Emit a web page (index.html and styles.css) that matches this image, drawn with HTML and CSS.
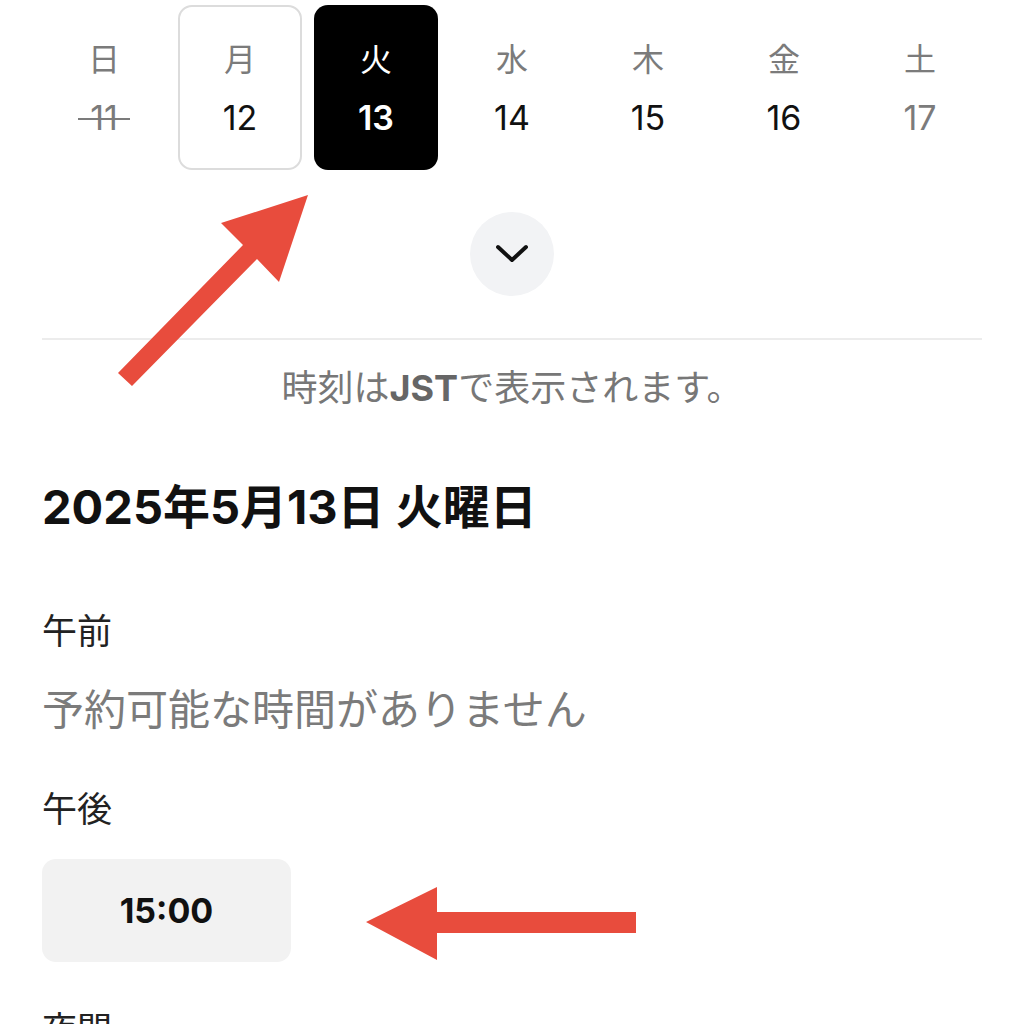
FILE: index.html
```html
<!DOCTYPE html>
<html lang="ja">
<head>
    <meta charset="UTF-8">
    <meta name="viewport" content="width=device-width, initial-scale=1.0">
    <title>予約</title>
    <link rel="stylesheet" href="styles.css">
</head>
<body>

<div class="page">
    <div class="week">
        <div class="day past"><span class="dow">日</span><span class="num">11</span></div>
        <div class="day outlined"><span class="dow">月</span><span class="num">12</span></div>
        <div class="day selected"><span class="dow">火</span><span class="num">13</span></div>
        <div class="day"><span class="dow">水</span><span class="num">14</span></div>
        <div class="day"><span class="dow">木</span><span class="num">15</span></div>
        <div class="day"><span class="dow">金</span><span class="num">16</span></div>
        <div class="day muted"><span class="dow">土</span><span class="num">17</span></div>
    </div>

    <div class="expand-row">
        <button class="expand-btn" type="button">
            <svg width="34" height="20" viewBox="0 0 34 20"><path d="M3 3 L17 16 L31 3" fill="none" stroke="#111" stroke-width="4" stroke-linecap="round" stroke-linejoin="round"/></svg>
        </button>
    </div>

    <hr class="divider">

    <p class="tz-note">時刻は<b>JST</b>で表示されます。</p>

    <h1 class="date-title">2025年5月13日 火曜日</h1>

    <h3 class="period">午前</h3>
    <p class="empty">予約可能な時間がありません</p>

    <h3 class="period">午後</h3>
    <div class="slots">
        <button class="slot" type="button">15:00</button>
    </div>

    <h3 class="period">夜間</h3>

    <!-- annotation arrows -->
    <svg class="arrow" width="1024" height="1024" viewBox="0 0 1024 1024">
        <polygon points="308,195 279,282 257,259 132,386 118,373 243,245 221,223" fill="#e84c3d"/>
    </svg>
    <svg class="arrow" width="1024" height="1024" viewBox="0 0 1024 1024">
        <polygon points="366,922 437,887 437,912 636,912 636,933 437,933 437,960" fill="#e84c3d"/>
    </svg>
</div>

</body>
</html>
```

FILE: styles.css
```css
body {
    margin: 0;
    background-color: #fff;
    font-family: Inter, "Noto Sans CJK JP", sans-serif;
    color: #111;
}
.page {
    position: relative;
    height: 1024px;
    overflow: hidden;
    padding: 5px 42px 0;
}
.week {
    display: grid;
    grid-template-columns: repeat(7, 1fr);
    gap: 12px;
}
.day {
    height: 165px;
    box-sizing: border-box;
    border: 2px solid transparent;
    border-radius: 14px;
    display: flex;
    flex-direction: column;
    align-items: center;
    padding-top: 33px;
}
.dow {
    font-size: 32px;
    line-height: 40px;
    color: #7b7b7b;
}
.num {
    font-size: 34px;
    line-height: 44px;
    margin-top: 16px;
    color: #111;
}
.past .num {
    position: relative;
    color: #7b7b7b;
}
.past .num::after {
    content: "";
    position: absolute;
    left: -12px;
    right: -12px;
    top: 22px;
    border-top: 2px solid #7b7b7b;
}
.muted .num {
    color: #7b7b7b;
}
.outlined {
    border-color: #dcdcdc;
}
.selected {
    background-color: #000;
}
.selected .dow,
.selected .num {
    color: #fff;
}
.selected .num {
    font-weight: 600;
}
.expand-row {
    display: flex;
    justify-content: center;
    margin-top: 42px;
}
.expand-btn {
    width: 84px;
    height: 84px;
    border-radius: 50%;
    border: none;
    background-color: #f2f3f5;
    display: flex;
    align-items: center;
    justify-content: center;
    padding: 0;
}
.divider {
    border: none;
    border-top: 2px solid #ececec;
    margin: 42px 0 0;
}
.tz-note {
    text-align: center;
    font-size: 36px;
    line-height: 48px;
    color: #777;
    margin: 24px 0 0;
}
.tz-note b {
    color: #666;
}
.date-title {
    font-size: 47px;
    line-height: 56px;
    font-weight: 700;
    margin: 67px 0 0;
    color: #111;
}
.period {
    font-size: 35px;
    line-height: 44px;
    font-weight: 400;
    margin: 74px 0 0;
    color: #222;
}
.empty {
    font-size: 42px;
    line-height: 52px;
    color: #7b7b7b;
    margin: 31px 0 0;
}
.empty + .period {
    margin-top: 51px;
}
.slots {
    display: flex;
    margin-top: 28px;
}
.slot {
    width: 249px;
    height: 103px;
    border: none;
    border-radius: 14px;
    background-color: #f2f2f2;
    font-family: inherit;
    font-size: 34px;
    font-weight: 700;
    color: #111;
}
.slots + .period {
    margin-top: 45px;
}
.arrow {
    position: absolute;
    left: 0;
    top: 0;
    pointer-events: none;
}
```
